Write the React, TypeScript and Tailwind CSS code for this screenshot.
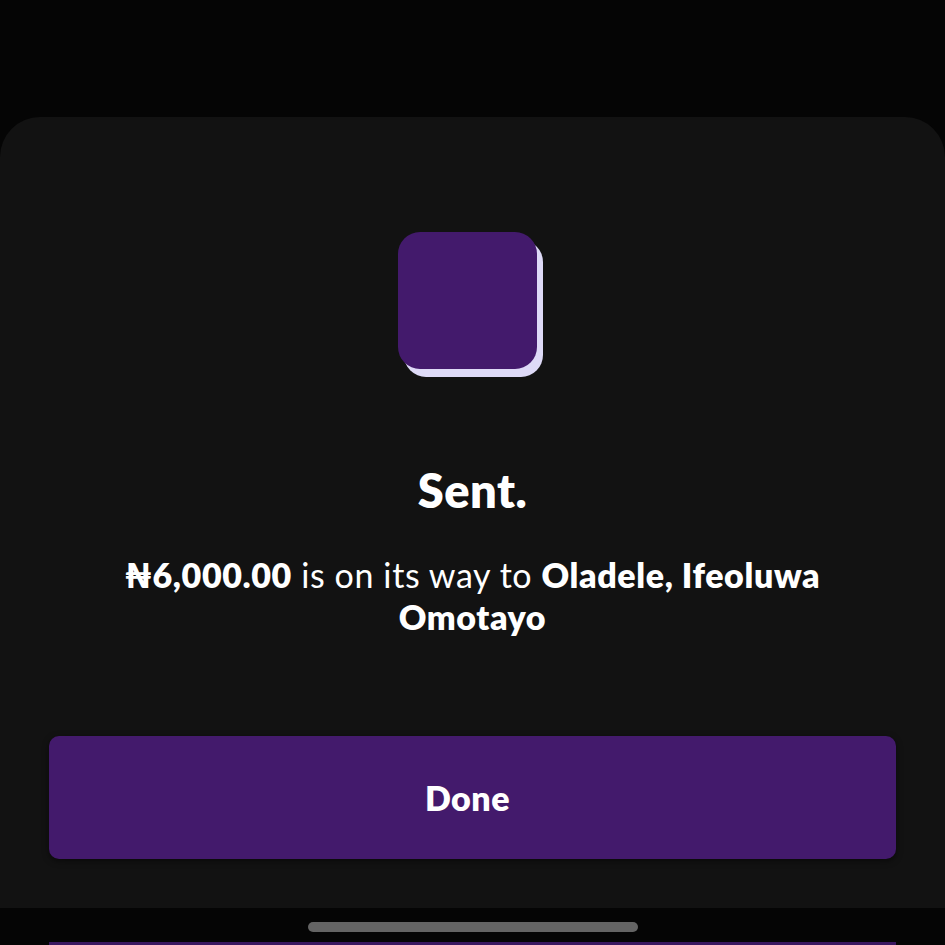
export default function App() {
  return (
    <div
      className="w-[945px] h-[945px] bg-[#050505] flex flex-col overflow-hidden"
      style={{ fontFamily: "Lato, 'Noto Sans', sans-serif" }}
    >
      <div className="h-[117px] shrink-0" />
      <div className="h-[791px] shrink-0 bg-[#121212] rounded-t-[40px] flex flex-col items-center">
        <div className="mt-[115px] mr-[4px] w-[145px] h-[145px] relative">
          <div className="absolute left-[6px] top-[8px] w-[139px] h-[137px] rounded-[22px] bg-[#dedaf7]" />
          <div className="absolute left-0 top-0 w-[139px] h-[137px] rounded-[22px] bg-[#431a6c]" />
        </div>
        <h1 className="mt-[88px] text-[47px] leading-[50px] font-extrabold text-white tracking-[0.5px]">Sent.</h1>
        <p className="mt-[39px] w-[740px] text-center text-[34px] leading-[42px] tracking-[0.6px] text-white">
          <span className="font-extrabold">₦6,000.00</span> is on its way to{" "}
          <span className="font-extrabold">Oladele, Ifeoluwa Omotayo</span>
        </p>
        <button className="mt-[98px] w-[847px] h-[123px] pr-[10px] rounded-[10px] bg-[#431a6c] text-white text-[34px] font-extrabold tracking-[0.5px] shadow-[0_2px_6px_rgba(0,0,0,0.5)]">
          Done
        </button>
      </div>
      <div className="flex-1 flex flex-col items-center">
        <div className="mt-[14px] w-[330px] h-[10px] rounded-full bg-[#646464]" />
        <div className="mt-[10px] w-[847px] h-[3px] bg-[#3a1760]" />
      </div>
    </div>
  );
}
